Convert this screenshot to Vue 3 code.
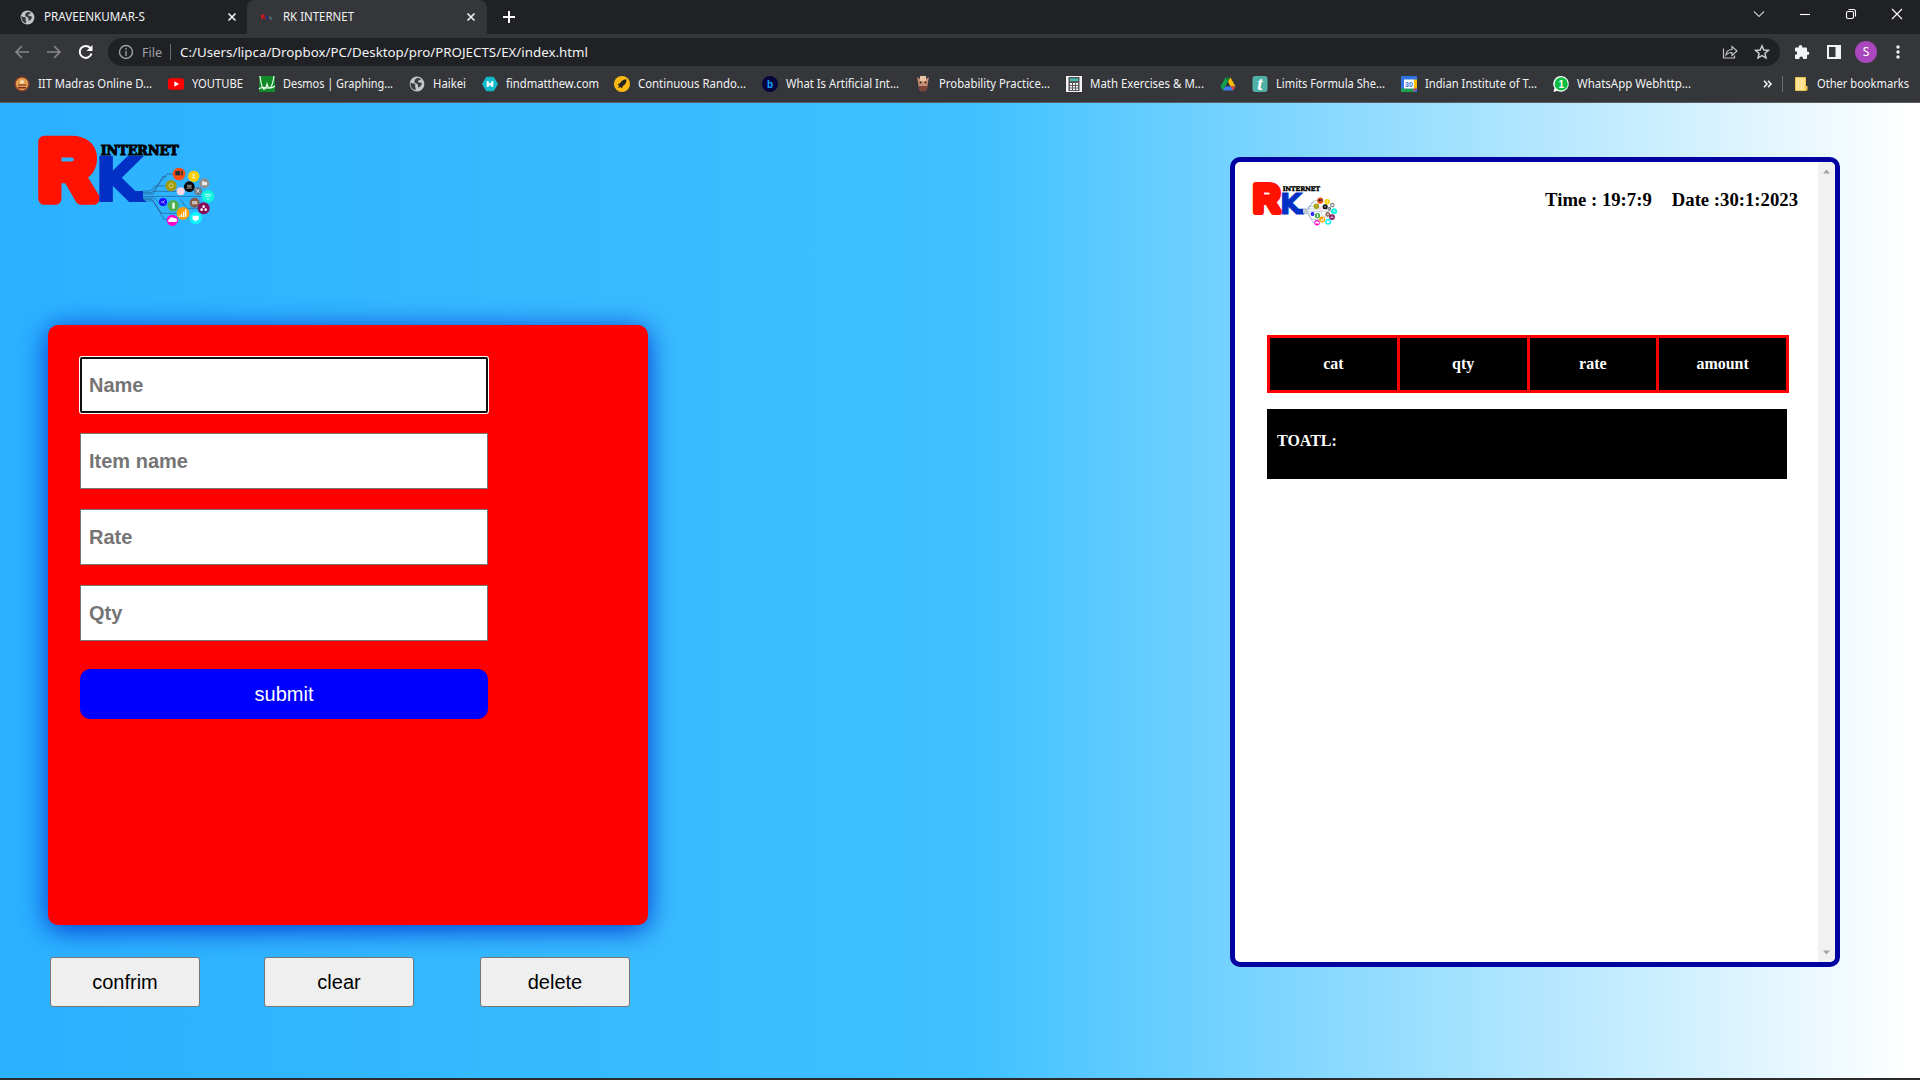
<script setup>
import { ref } from 'vue'

const bookmarks = [
  { icon: 'iit', label: 'IIT Madras Online D...', w: 114 },
  { icon: 'youtube', label: 'YOUTUBE', w: 51 },
  { icon: 'desmos', label: 'Desmos | Graphing...', w: 110 },
  { icon: 'globe', label: 'Haikei', w: 33 },
  { icon: 'matthew', label: 'findmatthew.com', w: 93 },
  { icon: 'rocket', label: 'Continuous Rando...', w: 108 },
  { icon: 'bletter', label: 'What Is Artificial Int...', w: 113 },
  { icon: 'bull', label: 'Probability Practice...', w: 111 },
  { icon: 'calc', label: 'Math Exercises & M...', w: 114 },
  { icon: 'drive', label: '', w: 0 },
  { icon: 'tletter', label: 'Limits Formula She...', w: 109 },
  { icon: 'calendar', label: 'Indian Institute of T...', w: 112 },
  { icon: 'whatsapp', label: 'WhatsApp Webhttp...', w: 114 },
]
const fields = ['Name', 'Item name', 'Rate', 'Qty']
const actions = ['confrim', 'clear', 'delete']
const columns = ['cat', 'qty', 'rate', 'amount']
const values = ref(['', '', '', ''])

const nodes = [
  [477, 192, 19, '#ff4d0d'], [521, 199, 17, '#ffcd05'], [553, 220, 15, '#8e8e8e'],
  [453, 227, 17, '#a19b0b'], [508, 230, 16, '#050505'], [534, 243, 12, '#6c7a86'],
  [482, 244, 12, '#f8cfe0'], [564, 259, 19, '#0ff5dc'], [429, 276, 12, '#1a0cff'],
  [460, 287, 17, '#4caf50'], [524, 278, 15, '#85594a'], [551, 295, 18, '#850c55'],
  [489, 310, 19, '#ff9f05'], [457, 331, 17, '#ff05c8'], [527, 324, 19, '#0ff2fb'],
]
</script>

<template>
  <svg width="0" height="0" class="defs" aria-hidden="true">
    <symbol id="globe" viewBox="0 0 16 16">
      <circle cx="8" cy="8" r="7.4" fill="#c2c5c9" />
      <path d="M1.6 6.4c2.300 1.800 3.300.4 4.400 1.600 1 1-.6 1.900.2 2.900.8.9.3 2.300.3 3.200C3 13.600.9 10 1.600 6.400zM6.300 3.200c1.500-1.300 3.900-1.500 5.500-.2-.7 1.700-2.800.9-2.900 2.500 0 1.200 2.800.7 3.600 1.600 1.100 1.200-.6 2.100-1.300 3.200-.5.9-1 1.500-1.900 1-.9-1.200.4-2.200-.8-3.200-1-.9-2.700-.8-3-2.200-.2-1.200.3-2 .8-2.700z" fill="#3b3d41" />
    </symbol>
    <symbol id="rklogo" viewBox="0 0 660 420">
      <g fill="none" stroke="#234a78" stroke-width="2" opacity=".85">
        <path d="M366 248H396L440 192H480M366 252H400L428 200H440M366 243H392L404 228H440M366 259H560M366 264H402L420 280H440M366 268H396L424 310H490M366 273H400L432 328H457M480 265L500 295H540M400 244H480" />
      </g>
      <g>
        <template v-for="n in nodes" :key="n[0]">
          <circle :cx="n[0]" :cy="n[1]" :r="n[2]" :fill="n[3]" />
        </template>
      </g>
      <g fill="#fff">
        <path d="M466 183h14v13h-14z" fill="#22303b" /><path d="M482 182h7v14h-7z" fill="#5d3a2f" />
        <path d="M515 191h3l8 15h-3zM523 191h3l-8 15h-3z" opacity=".8" />
        <path d="M546 214h6l2 2h7v10h-15z" opacity=".8" />
        <path d="M501 224h14v9h-14zM499 235h18v2h-18z" fill="#777" />
        <path d="M457 278h7v18h-7z" />
        <path d="M516 273h16v10h-16z" opacity=".6" />
        <path d="M477 316h4v5h-4zM483 311h4v10h-4zM489 305h4v16h-4zM495 298h4v23h-4z" />
        <path d="M447 336a5 5 0 0 1 1-9 8 8 0 0 1 14-2 6 6 0 0 1 6 11z" />
        <path d="M518 317h18v13h-18zM523 331h8v3h-8z" />
        <circle cx="551" cy="290" r="4" /><circle cx="545" cy="299" r="4" /><circle cx="557" cy="299" r="4" />
        <circle cx="564" cy="267" r="2.500" />
      </g>
      <g fill="none" stroke="#fff" stroke-width="2.500">
        <path d="M553 256q11-9 22 0M557 261q7-6 14 0" />
        <circle cx="453" cy="227" r="6" stroke="#e2e08b" />
        <path d="M527 237l12 11M538 237l-9 12M423 276h6l5-5M429 276l5 5" stroke-width="2" />
        <path d="M476 240h12v8h-12z" stroke-width="1.500" opacity=".7" />
      </g>
      <text x="57" y="263" font-size="247" textLength="169" lengthAdjust="spacingAndGlyphs" class="mark-r">R</text>
      <text x="224" y="274" font-size="181" textLength="142" lengthAdjust="spacingAndGlyphs" class="mark-k">K</text>
      <path d="M330 243H369V276H330z" fill="#0230c4" />
      <text x="242" y="134" font-size="39" textLength="234" lengthAdjust="spacingAndGlyphs" class="mark-net">INTERNET</text>
    </symbol>
  </svg>

  <div class="screen">
    <header class="chrome">
      <div class="tabs">
        <div class="tab idle">
          <svg class="fav"><use href="#globe" /></svg>
          <svg class="label" width="102" height="20"><text x="0" y="14" textLength="101" lengthAdjust="spacingAndGlyphs">PRAVEENKUMAR-S</text></svg>
          <svg class="close" viewBox="0 0 10 10"><path d="M1.500 1.500l7 7M8.500 1.500l-7 7" /></svg>
        </div>
        <div class="tab active">
          <svg class="fav" viewBox="0 0 14 14"><path d="M1 4.500h3.500v1.500l1 3H4L3 7v2H1z" fill="#c41a1a" /><path d="M6 6h1.600v3H6z" fill="#1c30a0" /><circle cx="10" cy="7.500" r="1" fill="#777" /><circle cx="11.500" cy="8.500" r="1" fill="#28808a" /><circle cx="10.500" cy="9.500" r=".8" fill="#804080" /></svg>
          <svg class="label" width="72" height="20"><text x="0" y="14" textLength="71" lengthAdjust="spacingAndGlyphs">RK INTERNET</text></svg>
          <svg class="close" viewBox="0 0 10 10"><path d="M1.500 1.500l7 7M8.500 1.500l-7 7" /></svg>
        </div>
        <svg class="plus" viewBox="0 0 12 12"><path d="M6 0v12M0 6h12" /></svg>
        <div class="window-controls">
          <svg width="12" height="10" viewBox="0 0 12 10"><path d="M1 2.500l5 5 5-5" stroke="#c6c7c9" /></svg>
          <svg width="12" height="10" viewBox="0 0 12 10"><path d="M1 5.500h10" /></svg>
          <svg width="12" height="12" viewBox="0 0 12 12"><rect x="1.500" y="3.500" width="7" height="7" rx="1.500" /><path d="M3.500 1.500h5a2 2 0 0 1 2 2v5" /></svg>
          <svg width="12" height="12" viewBox="0 0 12 12"><path d="M1 1l10 10M11 1L1 11" /></svg>
        </div>
      </div>

      <div class="toolbar">
        <svg class="nav dim" viewBox="0 0 16 16"><path d="M15 8H2M8 2L2 8l6 6" /></svg>
        <svg class="nav dim" viewBox="0 0 16 16"><path d="M1 8h13M8 2l6 6-6 6" /></svg>
        <svg class="nav" viewBox="0 0 16 16"><path d="M13.500 9.500A6 6 0 1 1 12.300 4" /><path d="M14.500 1v6h-6z" fill="#fff" stroke="none" /></svg>
        <div class="omnibox">
          <svg class="info" viewBox="0 0 16 16"><circle cx="8" cy="8" r="6.500" /><path d="M8 7v5M8 4v1.800" /></svg>
          <svg class="scheme" width="22" height="20"><text x="0" y="15" textLength="20" lengthAdjust="spacingAndGlyphs">File</text></svg>
          <i class="rule"></i>
          <svg class="url" width="420" height="20"><text x="0" y="15" textLength="408" lengthAdjust="spacingAndGlyphs">C:/Users/lipca/Dropbox/PC/Desktop/pro/PROJECTS/EX/index.html</text></svg>
          <svg class="share" viewBox="0 0 16 16"><path d="M1.500 4.500v9.500h11v-2.500" /><path d="M4 11c.4-4 3-5.500 6-5.500V2.500l5 4.500-5 4.500V8.500C7.500 8.500 5.500 9 4 11z" /></svg>
          <svg class="star" viewBox="0 0 16 16"><path d="M8 1.800l1.800 4.200 4.600.4-3.500 3 1.100 4.500L8 11.500l-4 2.400 1.100-4.500-3.500-3L6.200 6z" /></svg>
        </div>
        <div class="tools">
          <svg width="16" height="16" viewBox="0 0 16 16"><path d="M6.500 1a1.800 1.800 0 0 1 1.800 1.800V3.500H12a1 1 0 0 1 1 1V7.500h.6a1.700 1.700 0 0 1 0 3.400H13V14a1 1 0 0 1-1 1H9v-.8a1.800 1.800 0 0 0-3.600 0V15H2a1 1 0 0 1-1-1v-3.300h.8a1.800 1.800 0 0 0 0-3.500H1V4.500a1 1 0 0 1 1-1h2.700v-.7A1.800 1.800 0 0 1 6.500 1z" fill="#f1f3f4" /></svg>
          <svg width="14" height="14" viewBox="0 0 14 14"><path d="M0 0h14v14H0zM2 2v10h6.500V2z" fill="#f1f3f4" fill-rule="evenodd" /></svg>
          <span class="avatar">S</span>
          <svg width="4" height="14" viewBox="0 0 4 14" fill="#f1f3f4"><circle cx="2" cy="2" r="1.700" /><circle cx="2" cy="7" r="1.700" /><circle cx="2" cy="12" r="1.700" /></svg>
        </div>
      </div>

      <nav class="bookmarks">
        <div v-for="b in bookmarks" :key="b.icon" class="bookmark" :class="{ bare: !b.label }">
          <svg v-if="b.icon === 'globe'" class="bi"><use href="#globe" /></svg>
          <svg v-else class="bi" viewBox="0 0 16 16">
            <template v-if="b.icon === 'iit'"><circle cx="8" cy="8" r="7.500" fill="#8c3b2c" /><circle cx="8" cy="8" r="6.200" fill="#e0a04e" /><path d="M4 11h8v1.500H4zM4 8.500h8v1H4zM7 4h2v4H7z" fill="#7a2c22" /><circle cx="8" cy="6" r="2" fill="#fbe4b0" /></template>
            <template v-else-if="b.icon === 'youtube'"><rect y="2.300" width="16" height="11.400" rx="2.500" fill="#f00" /><path d="M6.300 5.300v5.400L11 8z" fill="#fff" /></template>
            <template v-else-if="b.icon === 'desmos'"><path d="M0 0h16v16H0z" fill="#128a2a" /><path d="M1 0c2 16 5 16 7 8 2 7 5 5 7-8M0 13c5-5 9 3 16-3" fill="none" stroke="#e6ffe9" stroke-width="1.200" /></template>
            <template v-else-if="b.icon === 'matthew'"><path d="M4.500 1.200h7L15.500 8l-4 6.800h-7L.5 8z" fill="#12bccb" stroke="#12bccb" stroke-linejoin="round" /><path d="M5.700 5v6M10.300 5v6M5 7.500l3 1 3-1" stroke="#fff" stroke-width="2" fill="none" /></template>
            <template v-else-if="b.icon === 'rocket'"><circle cx="8" cy="8" r="8" fill="#fdb913" /><path d="M12.500 3.500c-4 0-5.500 2-6.500 4L3.500 8 5 9.500l-1 2.500 2.500-1L8 12.500l.7-2.500c2.300-1.200 3.800-2.800 3.800-6.500z" fill="#222" /></template>
            <template v-else-if="b.icon === 'bletter'"><circle cx="8" cy="8" r="8" fill="#06063f" /><text x="8" y="11.800" text-anchor="middle" class="glyph g-b">b</text></template>
            <template v-else-if="b.icon === 'bull'"><path d="M2 1l3 2h6l3-2-1 5-1 7q-4 4-8 0L3 6z" fill="#c98f76" /><path d="M5 0h6v5H5z" fill="#e9c4a4" /><path d="M4 10h8v4q-4 3-8 0z" fill="#7c4639" /><circle cx="5.500" cy="6.500" r="1" fill="#222" /><circle cx="10.500" cy="6.500" r="1" fill="#222" /></template>
            <template v-else-if="b.icon === 'calc'"><path d="M0 0h16v16H0z" fill="#f2f2f2" /><path d="M2.500 1h11v14h-11z" fill="#555" /><path d="M4 2.500h8v2.500H4z" fill="#39c0b8" /><path d="M4 7h2v2H4zm3 0h2v2H7zm3 0h2v2h-2zM4 10h2v1.500H4zm3 0h2v1.500H7zm3 0h2v1.500h-2zM4 12.500h2V14H4zm3 0h2V14H7zm3 0h2V14h-2z" fill="#fff" /></template>
            <template v-else-if="b.icon === 'drive'"><path d="M5.500 1.500L.5 10.500 3 14.500l5-9z" fill="#12a150" /><path d="M5.500 1.500h5L8 5.500z" fill="#0d7d3a" /><path d="M10.500 1.500l5 9h-5L8 5.500z" fill="#fbbc05" /><path d="M5.300 10.500H15.500l-2.500 4H3z" fill="#3a7cf0" /><path d="M10.600 10.500h4.900l-2.500 4z" fill="#ea4335" /></template>
            <template v-else-if="b.icon === 'tletter'"><rect x=".5" width="15" height="16" rx="3" fill="#4fb0a5" /><text x="8" y="13.500" text-anchor="middle" class="glyph g-t">t</text></template>
            <template v-else-if="b.icon === 'calendar'"><path d="M0 0h16v16H0z" fill="#2f74e0" /><path d="M12.500 3.500H16V12.500h-3.500z" fill="#fbbc04" /><path d="M0 12.500h12.500V16H0z" fill="#1fa04c" /><path d="M12.500 12.500H16L12.500 16z" fill="#ea4335" /><path d="M3 3.500h10v9H3z" fill="#fff" /><text x="8" y="11" text-anchor="middle" class="glyph g-30">30</text></template>
            <template v-else-if="b.icon === 'whatsapp'"><path d="M8.200 0a7.800 7.800 0 1 1-3.800 14.700L.4 16l1.100-4A7.800 7.800 0 0 1 8.200 0z" fill="#fff" /><circle cx="8.200" cy="7.900" r="6.600" fill="#0dbd43" /><text x="8.200" y="11.500" text-anchor="middle" class="glyph g-1">1</text></template>
          </svg>
          <svg v-if="b.label" class="bl" :width="b.w" height="18"><text x="0" y="13" :textLength="b.w" lengthAdjust="spacingAndGlyphs">{{ b.label }}</text></svg>
        </div>
        <div class="others">
          <svg width="9" height="8" viewBox="0 0 9 8"><path d="M1 .8L4 4 1 7.200M5 .8L8 4 5 7.200" fill="none" stroke="#f1f3f4" stroke-width="1.600" /></svg>
          <i class="rule"></i>
          <svg width="13" height="14" viewBox="0 0 13 14"><path d="M.5.500h10v13H.500z" fill="#fee191" stroke="#eec64e" /><path d="M9.500 9h3v4.500h-3z" fill="#f3c94f" /></svg>
          <svg class="bl" width="93" height="18"><text x="0" y="13" textLength="92" lengthAdjust="spacingAndGlyphs">Other bookmarks</text></svg>
        </div>
      </nav>
    </header>

    <main class="page">
      <section class="entry">
        <svg class="logo"><use href="#rklogo" /></svg>
        <form class="card" @submit.prevent>
          <input v-for="(f, i) in fields" :key="f" v-model="values[i]" :placeholder="f" :class="{ focused: i === 0 }" />
          <button class="submit">submit</button>
        </form>
        <div class="actions">
          <button v-for="a in actions" :key="a">{{ a }}</button>
        </div>
      </section>

      <section class="bill">
        <div class="sheet">
          <div class="bill-head">
            <svg class="logo-small"><use href="#rklogo" /></svg>
            <h3>Time : 19:7:9</h3>
            <h3>Date :30:1:2023</h3>
          </div>
          <div class="columns">
            <div v-for="c in columns" :key="c">{{ c }}</div>
          </div>
          <div class="total">TOATL:</div>
        </div>
        <div class="scrollbar">
          <svg width="7" height="5" viewBox="0 0 7 5"><path d="M0 4.500L3.500.5 7 4.500z" /></svg>
          <svg width="7" height="5" viewBox="0 0 7 5"><path d="M0 .5l3.500 4L7 .5z" /></svg>
        </div>
      </section>
    </main>
    <footer class="edge"></footer>
  </div>
</template>

<style>
body { margin: 0; overflow: hidden; }
</style>

<style scoped>
* { box-sizing: border-box; }
.defs { position: absolute; }
.mark-r { font-family: "Liberation Sans", sans-serif; font-weight: 700; fill: #ff1200; stroke: #ff1200; stroke-width: 38; stroke-linejoin: round; }
.mark-k { font-family: "DejaVu Sans", sans-serif; font-weight: 700; fill: #0230c4; stroke: #0230c4; stroke-width: 6; }
.mark-net { font-family: "DejaVu Serif", serif; font-weight: 700; fill: #000; stroke: #000; stroke-width: 3; }
.screen { width: 1920px; height: 1080px; display: flex; flex-direction: column; overflow: hidden; font-family: "Noto Sans", "Open Sans", sans-serif; }
.chrome { height: 103px; flex: none; display: flex; flex-direction: column; background: #35363a; border-bottom: 1px solid #5b5c60; color: #fff; }
.chrome svg { display: block; flex: none; overflow: visible; }
.chrome text { fill: #f1f3f4; font-size: 12px; }
.tabs { height: 34px; display: flex; align-items: center; background: #202124; }
.tab { height: 34px; display: flex; align-items: center; }
.idle { width: 247px; padding-left: 20px; }
.active { width: 240px; padding-left: 13px; background: #35363a; border-radius: 8px 8px 0 0; }
.fav { width: 15px; height: 15px; margin-right: 9px; }
.active .fav { width: 14px; height: 14px; }
.close { width: 10px; height: 10px; margin-left: auto; margin-right: 10px; stroke: #f1f3f4; stroke-width: 1.6; }
.active .close { margin-right: 11px; }
.plus { width: 12px; height: 12px; margin-left: 16px; stroke: #fff; stroke-width: 2; }
.window-controls { margin-left: auto; display: flex; align-items: center; gap: 34px; padding: 0 17px 6px 0; fill: none; stroke: #fff; stroke-width: 1.1; }
.toolbar { height: 34px; display: flex; align-items: center; padding: 2px 18px 0 14px; }
.nav { width: 16px; height: 16px; margin-right: 16px; fill: none; stroke: #fff; stroke-width: 2; }
.nav.dim { stroke: #85868a; stroke-width: 1.7; }
.omnibox { width: 1672px; height: 28px; margin-left: -2px; padding: 0 10px 0 10px; display: flex; align-items: center; border-radius: 14px; background: #202124; }
.info { width: 16px; height: 16px; fill: none; stroke: #9aa0a6; stroke-width: 1.4; }
.scheme { margin-left: 8px; }
.toolbar .scheme text { fill: #9aa0a6; font-size: 13px; }
.toolbar .url text { font-size: 13px; }
.omnibox .rule { width: 1px; height: 16px; margin: 0 9px 0 6px; background: #6b6c70; }
.share { width: 16px; height: 16px; margin-left: auto; margin-right: 16px; fill: none; stroke: #c3c4c7; stroke-width: 1.2; }
.star { width: 16px; height: 16px; fill: none; stroke: #c8cacd; stroke-width: 1.5; }
.tools { flex: 1; display: flex; align-items: center; }
.tools svg:nth-child(1) { margin-left: 14px; margin-right: 17px; }
.avatar { width: 22px; height: 22px; margin: 0 19px 0 14px; border-radius: 50%; background: #ab47bc; font-size: 12px; line-height: 22px; text-align: center; }
.bookmarks { height: 34px; display: flex; align-items: center; padding: 0 10px 2px 14px; }
.bookmark { display: flex; align-items: center; margin-right: 15.9px; }
.bi { width: 16px; height: 16px; margin-right: 8px; }
.bare .bi { margin-right: 0; }
.bl text { font-size: 12px; }
.bookmarks .glyph { font-family: "Liberation Sans", sans-serif; font-weight: 700; fill: #fff; }
.bookmarks .g-b { font-size: 10px; fill: #19a8ff; }
.bookmarks .g-30 { font-size: 7px; fill: #2f74e0; }
.bookmarks .g-1 { font-size: 10px; }
.bookmarks .g-t { font-family: "Liberation Serif", serif; font-style: italic; font-size: 19px; }
.others { margin-left: auto; display: flex; align-items: center; }
.others .rule { width: 1px; height: 16px; margin: 0 12px 0 10px; background: #6b6c70; }
.others .bl { margin-left: 9px; }
.page { flex: 1; display: flex; justify-content: space-between; background: linear-gradient(to right, #2ab1ff 0%, #3fc1ff 50.5%, #fff 99.5%); }
.entry { width: 700px; padding: 7px 0 0 20px; display: flex; flex-direction: column; align-items: flex-start; }
.logo { width: 220px; height: 140px; display: block; }
.card { width: 600px; height: 600px; margin: 75px 0 0 28px; padding: 32px; display: flex; flex-direction: column; align-items: flex-start; gap: 20px; border-radius: 10px; background: #f00; box-shadow: 0 4px 28px #0034d0; }
.card input { width: 408px; height: 56px; padding: 1px 8px; border: 1px solid #767676; border-radius: 0; background: #fff; font: 700 20px "Liberation Sans", Arial, sans-serif; outline: none; }
.card input::placeholder { color: #757575; opacity: 1; }
.card input.focused { border: 2px solid #101010; padding: 1px 7px; border-radius: 2px; box-shadow: 0 0 0 1px #fff; }
.submit { width: 408px; height: 50px; margin-top: 8px; border: 0; border-radius: 10px; background: #00f; color: #fff; font: 20px "Liberation Sans", Arial, sans-serif; }
.actions { margin: 32px 0 0 30px; display: flex; gap: 64px; }
.actions button { width: 150px; height: 50px; border: 1px solid #767676; border-radius: 3px; background: #efefef; color: #000; font: 20px "Liberation Sans", Arial, sans-serif; }
.actions button:last-child { margin-left: 2px; }
.bill { width: 610px; height: 810px; margin: 54px 80px 0 0; display: flex; overflow: hidden; border: 5px solid #0202a0; border-radius: 10px; background: #fff; font-family: "Liberation Serif", "Times New Roman", serif; }
.sheet { flex: 1; }
.bill-head { height: 173px; display: flex; align-items: flex-start; padding: 8px 20px 0 9.4px; }
.logo-small { width: 105.5px; height: 67px; margin-right: auto; }
h3 { margin: 19px 0 0 20px; font-size: 18.72px; line-height: 22px; white-space: nowrap; }
.columns { width: 522px; height: 58px; margin-left: 32px; display: grid; grid-template-columns: repeat(4, 1fr); gap: 3px; padding: 3px; background: #f00; }
.columns div { background: #000; color: #fff; font-size: 16px; font-weight: 700; line-height: 52px; text-align: center; }
.total { width: 520px; height: 70px; margin: 16px 0 0 32px; padding: 23px 10px 0; background: #000; color: #fff; font-size: 16px; font-weight: 700; line-height: 18px; }
.scrollbar { width: 17px; padding: 7px 5px; display: flex; flex-direction: column; justify-content: space-between; background: #f1f1f1; fill: #a3a3a3; }
.edge { height: 2px; flex: none; background: #2b2b2b; }
</style>
